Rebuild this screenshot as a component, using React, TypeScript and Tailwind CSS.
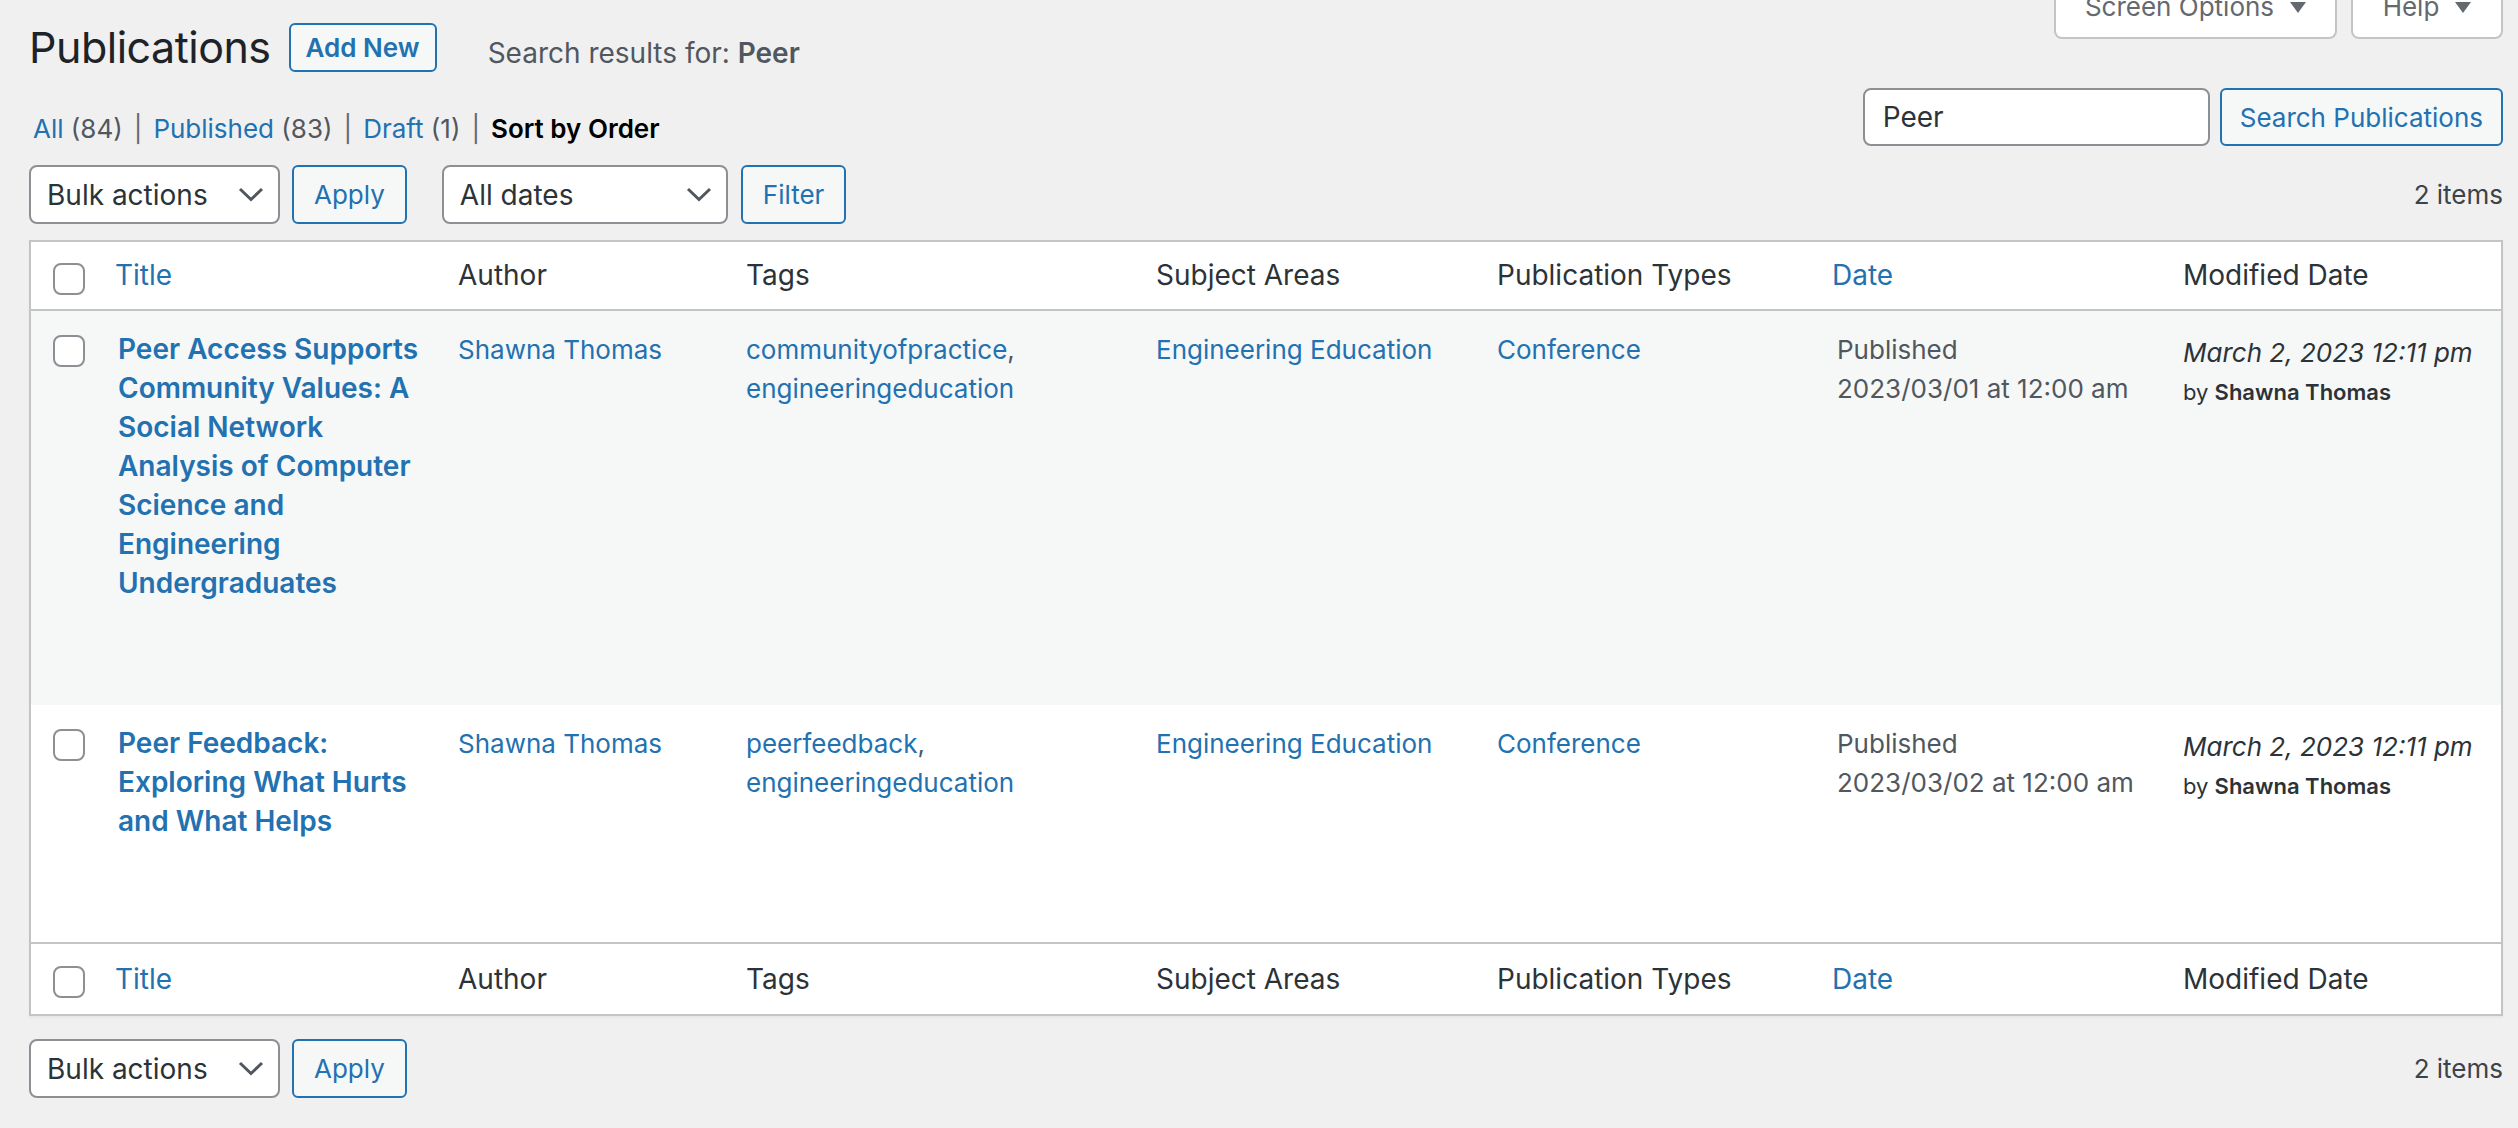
import React from "react";

type Row = {
  title: string[];
  tags: string[];
  date: string;
  striped: boolean;
  height: string;
};

const rows: Row[] = [
  {
    title: [
      "Peer Access Supports",
      "Community Values: A",
      "Social Network",
      "Analysis of Computer",
      "Science and",
      "Engineering",
      "Undergraduates",
    ],
    tags: ["communityofpractice", "engineeringeducation"],
    date: "2023/03/01 at 12:00 am",
    striped: true,
    height: "h-[394px]",
  },
  {
    title: ["Peer Feedback:", "Exploring What Hurts", "and What Helps"],
    tags: ["peerfeedback", "engineeringeducation"],
    date: "2023/03/02 at 12:00 am",
    striped: false,
    height: "h-[237px]",
  },
];

const cols = "grid grid-cols-[64px_343px_288px_410px_341px_335px_351px_338px]";

function Checkbox() {
  return <div className="w-[32px] h-[32px] rounded-[8px] border-2 border-[#8c8f94] bg-white" />;
}

function Chevron() {
  return (
    <svg width="26" height="15" viewBox="0 0 26 15" fill="none">
      <polyline points="2,2 13,12.5 24,2" stroke="#50575e" strokeWidth="3" />
    </svg>
  );
}

function Triangle() {
  return (
    <svg width="16" height="11" viewBox="0 0 16 11" className="ml-[16px]">
      <polygon points="0,0 16,0 8,11" fill="#646970" />
    </svg>
  );
}

function Select({ label, width }: { label: string; width: string }) {
  return (
    <div
      className={`${width} h-[59px] flex items-center justify-between rounded-[8px] border-2 border-[#8c8f94] bg-white pl-[16px] pr-[14px] text-[28px] text-[#2c3338]`}
    >
      <span>{label}</span>
      <Chevron />
    </div>
  );
}

function Button({ label, className = "" }: { label: string; className?: string }) {
  return (
    <div
      className={`h-[59px] flex items-center rounded-[6px] border-2 border-[#2271b1] bg-[#f6f7f7] px-[20px] text-[26px] text-[#2271b1] ${className}`}
    >
      {label}
    </div>
  );
}

function Sep() {
  return <span className="mx-[11px] text-[#646970]">|</span>;
}

function HeaderCells() {
  return (
    <>
      <div className="pl-[22px] pt-[6px] flex items-center">
        <Checkbox />
      </div>
      <div className="pl-[20px] text-[#2271b1]">Title</div>
      <div className="pl-[20px]">Author</div>
      <div className="pl-[20px]">Tags</div>
      <div className="pl-[20px]">Subject Areas</div>
      <div className="pl-[20px]">Publication Types</div>
      <div className="pl-[20px] text-[#2271b1]">Date</div>
      <div className="pl-[20px]">Modified Date</div>
    </>
  );
}

export default function App() {
  return (
    <div className="min-h-screen w-full bg-[#f0f0f1] font-['Inter',sans-serif] text-[26px] text-[#3c434a] pl-[29px] pr-[15px]">
      {/* page heading and screen meta tabs */}
      <div className="flex justify-between items-start">
        <div className="flex items-start">
          <h1 className="mt-[17px] text-[43px] leading-[60px] tracking-[-0.5px] font-normal text-[#1d2327]">Publications</h1>
          <div className="ml-[18px] mt-[23px] h-[49px] px-[15px] flex items-center rounded-[6px] border-2 border-[#2271b1] bg-[#f6f7f7] text-[26px] font-semibold text-[#2271b1]">
            Add New
          </div>
          <span className="ml-[51px] mt-[39px] text-[28px] leading-none text-[#50575e]">
            Search results for: <strong className="font-semibold">Peer</strong>
          </span>
        </div>
        <div className="flex gap-[14px] -mt-[17px]">
          <div className="h-[56px] w-[283px] flex items-center justify-center rounded-b-[8px] border-2 border-t-0 border-[#c3c4c7] bg-white pb-[10px] pt-[4px] text-[26px] leading-[42px] text-[#646970]">
            Screen Options
            <Triangle />
          </div>
          <div className="h-[56px] w-[152px] flex items-center justify-center rounded-b-[8px] border-2 border-t-0 border-[#c3c4c7] bg-white pb-[10px] pt-[4px] text-[26px] leading-[42px] text-[#646970]">
            Help
            <Triangle />
          </div>
        </div>
      </div>

      {/* views + search */}
      <div className="mt-[11px] flex justify-between items-start">
        <div className="mt-[21px] pl-[4px] leading-[39px] whitespace-nowrap text-[#50575e]">
          <a className="text-[#2271b1]">All</a> (84)
          <Sep />
          <a className="text-[#2271b1]">Published</a> (83)
          <Sep />
          <a className="text-[#2271b1]">Draft</a> (1)
          <Sep />
          <span className="font-semibold text-black">Sort by Order</span>
        </div>
        <div className="flex gap-[10px]">
          <div className="w-[347px] h-[58px] flex items-center rounded-[8px] border-2 border-[#8c8f94] bg-white pl-[18px] text-[28px] text-[#2c3338]">
            Peer
          </div>
          <div className="h-[58px] flex items-center rounded-[6px] border-2 border-[#2271b1] bg-[#f6f7f7] px-[18px] text-[26px] text-[#2271b1]">
            Search Publications
          </div>
        </div>
      </div>

      {/* top tablenav */}
      <div className="mt-[17px] flex items-center justify-between">
        <div className="flex items-center">
          <Select label="Bulk actions" width="w-[251px]" />
          <Button label="Apply" className="ml-[12px]" />
          <Select label="All dates" width="w-[286px] ml-[35px]" />
          <Button label="Filter" className="ml-[13px]" />
        </div>
        <span className="leading-[39px] text-[#3c434a]">2 items</span>
      </div>

      {/* list table */}
      <div className="mt-[16px] border-2 border-[#c3c4c7] bg-white shadow-[0_2px_2px_rgba(0,0,0,0.04)]">
        <div className={`${cols} h-[69px] items-center border-b-2 border-[#c3c4c7] text-[28px] leading-[39px] text-[#2c3338]`}>
          <HeaderCells />
        </div>

        {rows.map((r, i) => (
          <div
            key={i}
            className={`${cols} ${r.height} items-start ${r.striped ? "bg-[#f6f7f7]" : "bg-white"} leading-[39px] whitespace-nowrap`}
          >
            <div className="pl-[22px] pt-[24px]">
              <Checkbox />
            </div>
            <div className="pl-[23px] pt-[19px] text-[28px] font-semibold text-[#2271b1]">
              {r.title.map((t, j) => (
                <div key={j}>{t}</div>
              ))}
            </div>
            <div className="pl-[20px] pt-[19px] text-[#2271b1]">Shawna Thomas</div>
            <div className="pl-[20px] pt-[19px] text-[#50575e]">
              <a className="text-[#2271b1]">{r.tags[0]}</a>,
              <br />
              <a className="text-[#2271b1]">{r.tags[1]}</a>
            </div>
            <div className="pl-[20px] pt-[19px] text-[#2271b1]">Engineering Education</div>
            <div className="pl-[20px] pt-[19px] text-[#2271b1]">Conference</div>
            <div className="pl-[25px] pt-[19px] text-[#50575e]">
              Published
              <br />
              {r.date}
            </div>
            <div className="pl-[20px] pt-[22px] text-[#2c3338]">
              <div className="italic text-[26px] leading-[39px]">March 2, 2023 12:11 pm</div>
              <div className="text-[22px] leading-[40px]">
                by <strong className="font-semibold">Shawna Thomas</strong>
              </div>
            </div>
          </div>
        ))}

        <div className={`${cols} h-[72px] items-center border-t-2 border-[#c3c4c7] text-[28px] leading-[39px] text-[#2c3338]`}>
          <HeaderCells />
        </div>
      </div>

      {/* bottom tablenav */}
      <div className="mt-[23px] flex items-center justify-between">
        <div className="flex items-center">
          <Select label="Bulk actions" width="w-[251px]" />
          <Button label="Apply" className="ml-[12px]" />
        </div>
        <span className="leading-[39px] text-[#3c434a]">2 items</span>
      </div>
    </div>
  );
}
